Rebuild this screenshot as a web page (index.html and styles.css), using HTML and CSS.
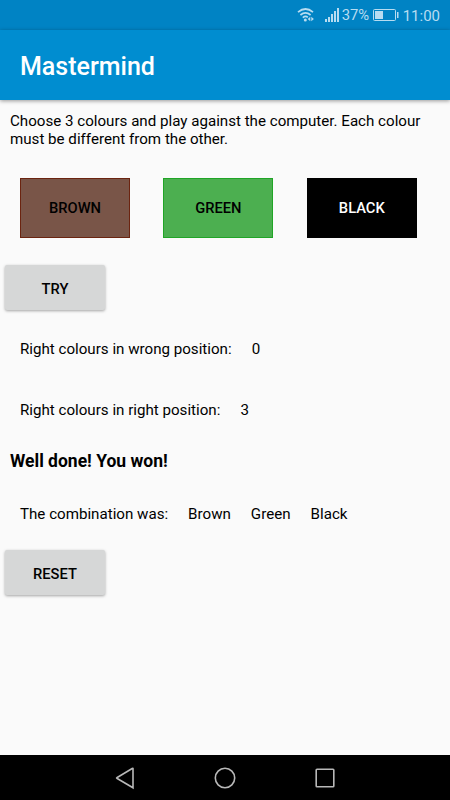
FILE: index.html
```html
<!DOCTYPE html>
<html lang="en">
<head>
  <meta charset="UTF-8">
  <meta name="viewport" content="width=device-width, initial-scale=1">
  <title>Mastermind</title>
  <link rel="stylesheet" href="styles.css">
</head>
<body>
  <div class="status">
    <svg class="wifi" viewBox="0 0 18 16">
      <path d="M1 5.2Q8.5 -1.2 16 5.2M3.4 8Q8.5 3.6 13.6 8M5.8 10.7Q8.5 8.4 10.8 10.4" fill="none" stroke="#b7dcf1" stroke-width="1.7"/>
      <circle cx="8.3" cy="12.9" r="1.5"/>
      <path d="M13.3 9.8v4.4l-2.6-2.2zM14.3 9.8v4.4l2.6-2.2z"/>
    </svg>
    <svg class="signal" viewBox="0 0 15 14">
      <path d="M0 11h2v3H0zM3 9h2v5H3zM6 6h2v8H6zM9 3h2v11H9zM12 0h2v14h-2z"/>
    </svg>
    <span class="percent">37%</span>
    <svg class="battery" viewBox="0 0 26 12">
      <rect x="0.5" y="0.5" width="22" height="11" rx="1" fill="none" stroke="#b7dcf1"/>
      <rect x="2" y="2" width="8" height="8"/>
      <rect x="24" y="3" width="1.5" height="6"/>
    </svg>
    <span class="clock">11:00</span>
  </div>

  <header class="toolbar">
    <h1>Mastermind</h1>
  </header>

  <main>
    <p class="intro">Choose 3 colours and play against the computer. Each colour must be different from the other.</p>

    <div class="colours">
      <button class="colour brown">BROWN</button>
      <button class="colour green">GREEN</button>
      <button class="colour black">BLACK</button>
    </div>

    <button class="btn">TRY</button>

    <div class="row wrong">
      <span>Right colours in wrong position:</span>
      <span>0</span>
    </div>
    <div class="row right">
      <span>Right colours in right position:</span>
      <span>3</span>
    </div>

    <p class="message">Well done! You won!</p>

    <div class="row combination">
      <span>The combination was:</span>
      <span>Brown</span>
      <span>Green</span>
      <span>Black</span>
    </div>

    <button class="btn">RESET</button>
  </main>

  <!-- Android navigation bar -->
  <nav class="navbar">
    <svg viewBox="0 0 24 24"><path d="M20 2.2V21.8L3.8 12.2Q3.4 12 3.8 11.8L19.2 2.5Q20 2 20 2.6z"/></svg>
    <svg viewBox="0 0 24 24"><circle cx="12" cy="12" r="9.7"/></svg>
    <svg viewBox="0 0 24 24"><rect x="3.2" y="3.2" width="17.6" height="17.6" rx="0.8"/></svg>
  </nav>
</body>
</html>
```

FILE: styles.css
```css
* {
  box-sizing: border-box;
}

body {
  margin: 0;
  height: 800px;
  display: flex;
  flex-direction: column;
  background-color: #fafafa;
  font-family: Roboto, sans-serif;
  font-size: 15.13px;
  color: #000;
  overflow: hidden;
}

.status {
  height: 30px;
  display: flex;
  align-items: center;
  justify-content: flex-end;
  padding-right: 10px;
  background-color: #0083c4;
  color: #b7dcf1;
}

.status svg {
  fill: #b7dcf1;
}

.wifi {
  width: 18px;
  height: 16px;
  margin-right: 10px;
}

.signal {
  width: 15px;
  height: 14px;
  margin-right: 2px;
}

.percent {
  width: 28px;
  margin-right: 3px;
  font-size: 14.8px;
}

.battery {
  width: 26px;
  height: 12px;
  margin-right: 4px;
}

.clock {
  font-size: 15px;
  padding-top: 1px;
}

.toolbar {
  height: 70px;
  display: flex;
  align-items: center;
  padding: 2px 20px 0;
  background-color: #008dd0;
  color: #fff;
  box-shadow: 0 1px 4px rgba(0, 0, 0, 0.4);
}

h1 {
  margin: 0;
  font-size: 25px;
  font-weight: 500;
}

main {
  flex: 1;
  display: flex;
  flex-direction: column;
  align-items: flex-start;
}

button {
  font-family: inherit;
  font-size: 14.7px;
  font-weight: 500;
  color: #000;
  border: none;
  padding: 0;
}

.intro {
  margin: 12px 10px 0;
  line-height: 18px;
}

.colours {
  display: flex;
  gap: 33.4px;
  margin: 30px 20px 27px;
}

.colour {
  width: 110px;
  height: 60px;
  border: 1px solid;
}

.brown {
  background-color: #795548;
  border-color: #6b2410;
}

.green {
  background-color: #4caf50;
  border-color: #20a526;
}

.black {
  background-color: #000;
  border-color: #000;
  color: #fff;
}

.btn {
  width: 100px;
  height: 45px;
  margin-left: 5px;
  padding-top: 2px;
  border-radius: 2px;
  background-color: #d6d7d7;
  box-shadow: 0 1px 3px rgba(0, 0, 0, 0.35);
}

.row {
  display: flex;
  gap: 20px;
  padding-left: 20px;
  line-height: 18px;
}

.wrong {
  margin-top: 30px;
}

.right {
  margin-top: 43px;
}

.message {
  margin: 31px 10px 0;
  font-size: 17.5px;
  font-weight: bold;
  line-height: 22px;
}

.combination {
  margin: 33px 0 27px;
}

.navbar {
  height: 45px;
  display: flex;
  justify-content: center;
  align-items: center;
  gap: 76px;
  background-color: #000;
}

.navbar svg {
  width: 24px;
  height: 24px;
  fill: none;
  stroke: #b8b8b8;
  stroke-width: 1.6;
}
```
